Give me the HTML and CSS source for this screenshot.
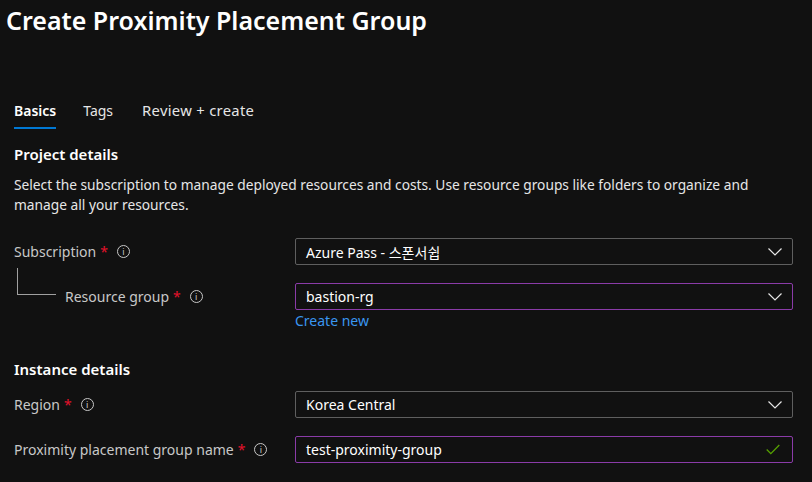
FILE: index.html
```html
<!DOCTYPE html>
<html>
<head>
<meta charset="utf-8">
<link rel="stylesheet" href="styles.css">
</head>
<body>
<div class="page">
  <h1 class="title">Create Proximity Placement Group</h1>
  <div class="content">
    <nav class="tabs">
      <span class="tab active">Basics</span>
      <span class="tab">Tags</span>
      <span class="tab">Review + create</span>
    </nav>
    <h2 class="section">Project details</h2>
    <p class="desc">Select the subscription to manage deployed resources and costs. Use resource groups like folders to organize and manage all your resources.</p>

    <div class="row first">
      <div class="label">Subscription <span class="req">*</span> <span class="info">i</span></div>
      <div class="select"><span class="value">Azure Pass - 스폰서쉽</span><svg class="chev" viewBox="0 0 14 8" width="14" height="8"><path d="M0.5 0.5 L7 7 L13.5 0.5" fill="none" stroke="#e6e6e6" stroke-width="1.2"/></svg></div>
    </div>
    <div class="row">
      <div class="label sub"><span class="tree"></span>Resource group <span class="req">*</span> <span class="info">i</span></div>
      <div class="field-col">
        <div class="select focus"><span class="value">bastion-rg</span><svg class="chev" viewBox="0 0 14 8" width="14" height="8"><path d="M0.5 0.5 L7 7 L13.5 0.5" fill="none" stroke="#e6e6e6" stroke-width="1.2"/></svg></div>
        <a class="link">Create new</a>
      </div>
    </div>

    <h2 class="section section2">Instance details</h2>
    <div class="row first2">
      <div class="label">Region <span class="req">*</span> <span class="info">i</span></div>
      <div class="select"><span class="value">Korea Central</span><svg class="chev" viewBox="0 0 14 8" width="14" height="8"><path d="M0.5 0.5 L7 7 L13.5 0.5" fill="none" stroke="#e6e6e6" stroke-width="1.2"/></svg></div>
    </div>
    <div class="row">
      <div class="label">Proximity placement group name <span class="req">*</span> <span class="info">i</span></div>
      <div class="select focus"><span class="value">test-proximity-group</span><svg class="check" viewBox="0 0 14 11" width="14" height="11"><path d="M0.7 5.5 L4.8 9.6 L13.3 1" fill="none" stroke="#57a300" stroke-width="1.3"/></svg></div>
    </div>
  </div>
</div>
</body>
</html>
```
FILE: styles.css
```css
html, body {
  margin: 0;
  padding: 0;
  background: #111111;
}
body {
  font-family: "Noto Sans", "Noto Sans CJK KR", sans-serif;
  color: #e6e6e6;
  font-size: 14px;
}
.page {
  width: 812px;
  height: 482px;
  overflow: hidden;
}
.title {
  margin: 0;
  padding: 4px 0 0 6px;
  height: 36px;
  line-height: 32px;
  font-size: 25px;
  font-weight: 600;
  color: #ffffff;
}
.content {
  padding: 0 0 0 14px;
}
.tabs {
  display: flex;
  gap: 27px;
  margin-top: 60px;
  height: 30px;
}
.tab {
  line-height: 21px;
  height: 29px;
  box-sizing: border-box;
  color: #e6e6e6;
}
.tab:nth-child(3) {
  font-size: 14.8px;
  letter-spacing: 0.3px;
  margin-left: 2px;
}
.tab.active {
  font-weight: 600;
  color: #ffffff;
  border-bottom: 2px solid #0078d4;
}
.section {
  margin: 13px 0 0 0;
  font-size: 15px;
  font-weight: 600;
  color: #ffffff;
  line-height: 22px;
}
.desc {
  margin: 10px 0 0 0;
  line-height: 20px;
  width: 760px;
  font-size: 13.75px;
  color: #e6e6e6;
}
.row {
  display: flex;
  align-items: flex-start;
  margin-top: 18px;
}
.row.first { margin-top: 23px; }
.row.first2 { margin-top: 11px; }
.label {
  width: 281px;
  flex: none;
  height: 27px;
  display: flex;
  align-items: center;
  color: #c8c8c8;
  position: relative;
}
.label.sub {
  padding-left: 51px;
  box-sizing: border-box;
}
.tree {
  position: absolute;
  left: 3px;
  top: -15px;
  width: 38px;
  height: 26px;
  border-left: 1px solid #a0a0a0;
  border-bottom: 1px solid #a0a0a0;
}
.req {
  color: #e5112b;
  margin-left: 4px;
  margin-right: 9px;
}
.info {
  display: inline-flex;
  width: 11px;
  height: 11px;
  border: 1px solid #c8c8c8;
  border-radius: 50%;
  font-size: 9px;
  line-height: 11px;
  justify-content: center;
  align-items: center;
  color: #c8c8c8;
}
.field-col {
  display: flex;
  flex-direction: column;
}
.select {
  width: 498px;
  height: 27px;
  box-sizing: border-box;
  border: 1px solid #5f5f5f;
  border-radius: 2px;
  display: flex;
  align-items: center;
  justify-content: space-between;
  padding: 0 10px 0 10px;
  color: #ffffff;
}
.select.focus {
  border-color: #8a3ba8;
}
.chev { display: block; }
.check { display: block; margin-right: 2px; }
.link {
  color: #3a96f0;
  line-height: 22px;
  text-decoration: none;
}
.section2 {
  margin-top: 26px;
}
```
